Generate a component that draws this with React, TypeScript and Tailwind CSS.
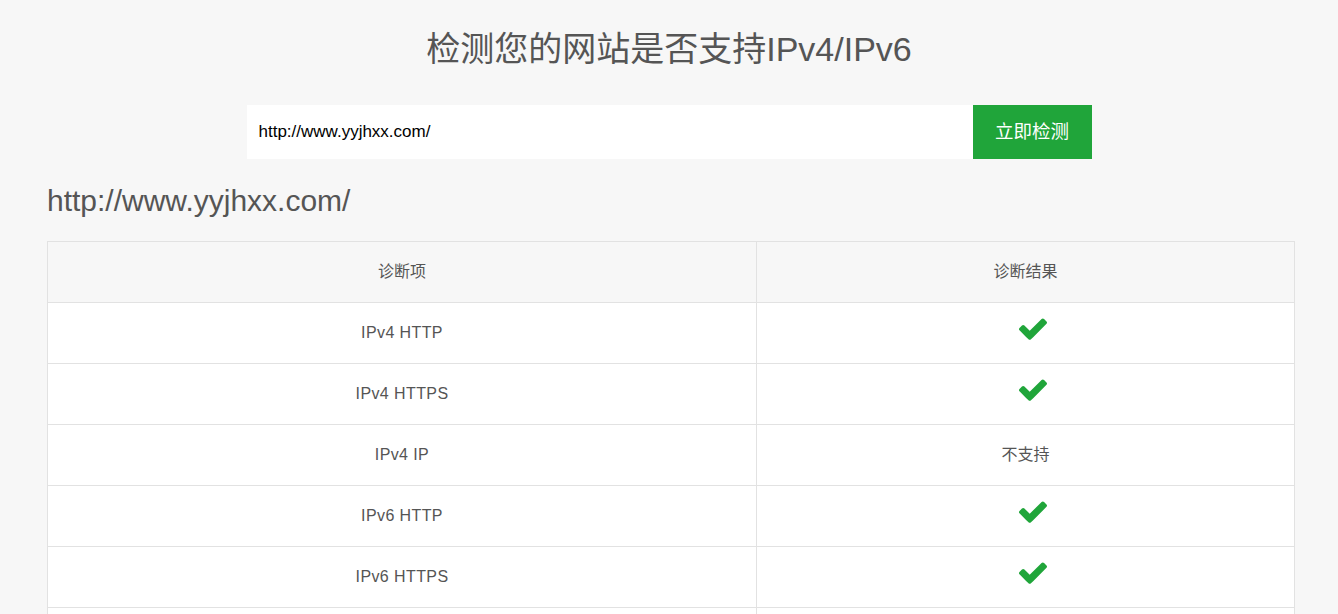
import { useState } from 'react';

interface CheckRow {
  name: string;
  ok: boolean;
}

const rows: CheckRow[] = [
  { name: 'IPv4 HTTP', ok: true },
  { name: 'IPv4 HTTPS', ok: true },
  { name: 'IPv4 IP', ok: false },
  { name: 'IPv6 HTTP', ok: true },
  { name: 'IPv6 HTTPS', ok: true },
  { name: 'IPv6 IP', ok: true },
];

function CheckIcon() {
  return (
    <svg
      viewBox="121 290 1550 1260"
      className="block mx-auto h-[24px] w-[28px] translate-x-[7px] -translate-y-[4px] fill-[#20a53a]"
    >
      <path d="M1671 566q0 40-28 68l-724 724-136 136q-28 28-68 28t-68-28l-136-136-362-362q-28-28-28-68t28-68l136-136q28-28 68-28t68 28l294 295 656-657q28-28 68-28t68 28l136 136q28 28 28 68z" />
    </svg>
  );
}

export default function App() {
  const [url, setUrl] = useState('http://www.yyjhxx.com/');

  return (
    <div
      className="min-h-screen bg-[#f7f7f7] text-[#555] pt-[22px]"
      style={{ fontFamily: '"Liberation Sans", "Noto Sans CJK SC", sans-serif' }}
    >
      <h1 className="text-center text-[34px] leading-[54px] font-normal">
        检测您的网站是否支持IPv4/IPv6
      </h1>

      <div className="flex justify-center mt-[29px]">
        <input
          value={url}
          onChange={(e) => setUrl(e.target.value)}
          className="w-[726px] h-[54px] bg-white px-[12px] text-[17px] text-black outline-none"
        />
        <button className="w-[119px] h-[54px] bg-[#20a53a] text-white text-[18.5px]">
          立即检测
        </button>
      </div>

      <div className="mx-[47px] w-[1248px]">
        <h2 className="mt-[19px] text-[30px] leading-[45px] font-normal">
          http://www.yyjhxx.com/
        </h2>

        <table className="mt-[18px] w-full border-collapse bg-white text-[16px] text-center">
          <thead>
            <tr className="bg-[#f7f7f7] h-[61px]">
              <th className="w-[709px] border border-[#e2e2e2] font-normal">诊断项</th>
              <th className="border border-[#e2e2e2] font-normal">诊断结果</th>
            </tr>
          </thead>
          <tbody>
            {rows.map((row) => (
              <tr key={row.name} className="h-[61px]">
                <td className="border border-[#e2e2e2] tracking-[0.4px]">{row.name}</td>
                <td className="border border-[#e2e2e2]">
                  {row.ok ? <CheckIcon /> : '不支持'}
                </td>
              </tr>
            ))}
          </tbody>
        </table>
      </div>
    </div>
  );
}
